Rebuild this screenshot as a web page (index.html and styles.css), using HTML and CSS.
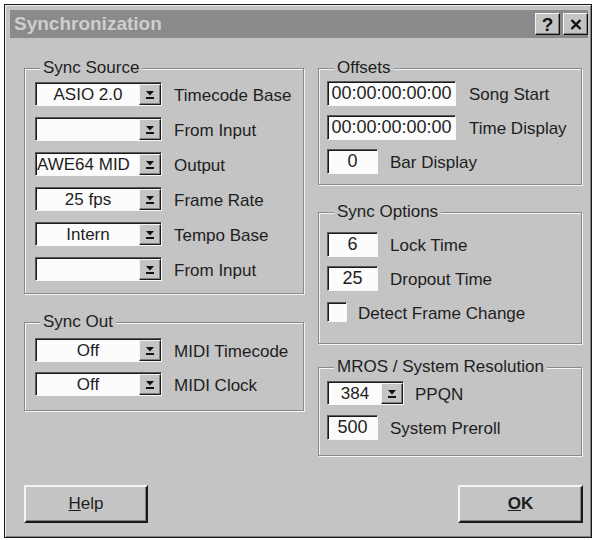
FILE: index.html
```html
<!DOCTYPE html>
<html>
<head>
<meta charset="utf-8">
<link rel="stylesheet" href="styles.css">
</head>
<body>
<div class="window">
  <div class="titlebar">
    <span class="title">Synchronization</span>
    <div class="tb-btns">
      <span class="tb-btn">?</span>
      <span class="tb-btn"><svg width="12" height="11" viewBox="0 0 12 11"><path d="M1.5 1 L10.5 10 M10.5 1 L1.5 10" stroke="#111" stroke-width="2.4" fill="none"/></svg></span>
    </div>
  </div>

  <div class="columns">
    <div class="col col-left">
      <div class="group src">
        <div class="legend">Sync Source</div>
        <div class="rows">
          <div class="row"><div class="combo"><span class="val">ASIO 2.0</span><span class="dd"><svg width="10" height="10" viewBox="0 0 10 10"><path d="M1 1 H9 L5 5.5 Z" fill="#111"/><rect x="1" y="7" width="8" height="2" fill="#111"/></svg></span></div><span class="lbl">Timecode Base</span></div>
          <div class="row"><div class="combo"><span class="val"></span><span class="dd"><svg width="10" height="10" viewBox="0 0 10 10"><path d="M1 1 H9 L5 5.5 Z" fill="#111"/><rect x="1" y="7" width="8" height="2" fill="#111"/></svg></span></div><span class="lbl">From Input</span></div>
          <div class="row"><div class="combo"><span class="val val-left">AWE64 MID</span><span class="dd"><svg width="10" height="10" viewBox="0 0 10 10"><path d="M1 1 H9 L5 5.5 Z" fill="#111"/><rect x="1" y="7" width="8" height="2" fill="#111"/></svg></span></div><span class="lbl">Output</span></div>
          <div class="row"><div class="combo"><span class="val">25 fps</span><span class="dd"><svg width="10" height="10" viewBox="0 0 10 10"><path d="M1 1 H9 L5 5.5 Z" fill="#111"/><rect x="1" y="7" width="8" height="2" fill="#111"/></svg></span></div><span class="lbl">Frame Rate</span></div>
          <div class="row"><div class="combo"><span class="val">Intern</span><span class="dd"><svg width="10" height="10" viewBox="0 0 10 10"><path d="M1 1 H9 L5 5.5 Z" fill="#111"/><rect x="1" y="7" width="8" height="2" fill="#111"/></svg></span></div><span class="lbl">Tempo Base</span></div>
          <div class="row"><div class="combo"><span class="val"></span><span class="dd"><svg width="10" height="10" viewBox="0 0 10 10"><path d="M1 1 H9 L5 5.5 Z" fill="#111"/><rect x="1" y="7" width="8" height="2" fill="#111"/></svg></span></div><span class="lbl">From Input</span></div>
        </div>
      </div>

      <div class="group out">
        <div class="legend">Sync Out</div>
        <div class="rows">
          <div class="row"><div class="combo"><span class="val">Off</span><span class="dd"><svg width="10" height="10" viewBox="0 0 10 10"><path d="M1 1 H9 L5 5.5 Z" fill="#111"/><rect x="1" y="7" width="8" height="2" fill="#111"/></svg></span></div><span class="lbl">MIDI Timecode</span></div>
          <div class="row"><div class="combo"><span class="val">Off</span><span class="dd"><svg width="10" height="10" viewBox="0 0 10 10"><path d="M1 1 H9 L5 5.5 Z" fill="#111"/><rect x="1" y="7" width="8" height="2" fill="#111"/></svg></span></div><span class="lbl">MIDI Clock</span></div>
        </div>
      </div>
    </div>

    <div class="col col-right">
      <div class="group offsets">
        <div class="legend">Offsets</div>
        <div class="rows rows-r">
          <div class="row"><div class="field long">00:00:00:00:00</div><span class="lbl lbl-long">Song Start</span></div>
          <div class="row"><div class="field long">00:00:00:00:00</div><span class="lbl lbl-long">Time Display</span></div>
          <div class="row"><div class="field short">0</div><span class="lbl">Bar Display</span></div>
        </div>
      </div>

      <div class="group opts">
        <div class="legend">Sync Options</div>
        <div class="rows rows-r">
          <div class="row"><div class="field short">6</div><span class="lbl">Lock Time</span></div>
          <div class="row"><div class="field short">25</div><span class="lbl">Dropout Time</span></div>
          <div class="row"><div class="chk"></div><span class="lbl lbl-chk">Detect Frame Change</span></div>
        </div>
      </div>

      <div class="group mros">
        <div class="legend">MROS / System Resolution</div>
        <div class="rows rows-r">
          <div class="row"><div class="combo combo-s"><span class="val">384</span><span class="dd"><svg width="10" height="10" viewBox="0 0 10 10"><path d="M1 1 H9 L5 5.5 Z" fill="#111"/><rect x="1" y="7" width="8" height="2" fill="#111"/></svg></span></div><span class="lbl lbl-ppqn">PPQN</span></div>
          <div class="row"><div class="field short">500</div><span class="lbl">System Preroll</span></div>
        </div>
      </div>
    </div>
  </div>

  <div class="footer">
    <div class="btn"><span><u>H</u>elp</span></div>
    <div class="btn btn-ok"><span><u>O</u>K</span></div>
  </div>
</div>
</body>
</html>
```

FILE: styles.css
```css
* { box-sizing: border-box; }

body {
  margin: 0;
  background: #ffffff;
  font-family: "Liberation Sans", Arial, sans-serif;
  font-size: 17px;
  color: #1e1e1e;
}

.window {
  margin: 4px 0 0 4px;
  width: 588px;
  height: 534px;
  background: #c4c4c4;
  border: 1px solid #1a1a1a;
  box-shadow: inset 1px 1px 0 #efefef, inset -1px -1px 0 #808080;
  padding: 5px 3px 5px 5px;
  display: flex;
  flex-direction: column;
}

/* title bar */
.titlebar {
  height: 28px;
  flex: none;
  background: #8a8a8a;
  display: flex;
  align-items: center;
  padding: 0 0 0 4px;
}
.title {
  flex: 1;
  font-weight: bold;
  font-size: 19px;
  color: #cecece;
}
.tb-btns { display: flex; gap: 3px; }
.tb-btn {
  width: 25px;
  height: 22px;
  background: #c4c4c4;
  border: 1px solid;
  border-color: #f4f4f4 #111 #111 #f4f4f4;
  box-shadow: inset -1px -1px 0 #808080;
  display: flex;
  align-items: center;
  justify-content: center;
  font-weight: bold;
  font-size: 19px;
  color: #111;
  line-height: 1;
}

/* columns */
.columns {
  display: flex;
  gap: 14px;
  padding: 30px 0 0 14px;
}
.col-left { width: 280px; }
.col-right { width: 264px; }

/* group boxes */
.group {
  border: 1px solid #8a8a8a;
  box-shadow: 1px 1px 0 #f4f4f4, inset 1px 1px 0 #f4f4f4;
}
.legend {
  display: table;
  margin: -12px 0 0 15px;
  padding: 0 3px;
  height: 22px;
  line-height: 22px;
  background: #c4c4c4;
}
.rows {
  display: flex;
  flex-direction: column;
  padding-left: 10px;
}
.rows-r { padding-left: 8px; }

.src .rows { margin-top: 3px; padding-bottom: 12px; gap: 11px; }
.out { margin-top: 28px; }
.out .rows { margin-top: 5px; padding-bottom: 14px; gap: 10px; }

.offsets .rows { margin-top: 2px; padding-bottom: 10px; gap: 9px; }
.opts { margin-top: 27px; }
.opts .rows { margin-top: 9px; padding-bottom: 19px; gap: 9px; }
.mros { margin-top: 23px; }
.mros .rows { margin-top: 3px; padding-bottom: 15px; gap: 10px; }

.row {
  display: flex;
  align-items: center;
}
.lbl {
  margin-left: 12px;
  padding-top: 3px;
  white-space: nowrap;
}
.lbl-long { margin-left: 13px; }
.lbl-chk { margin-left: 11px; }
.lbl-ppqn { margin-left: 11px; }

/* combo box */
.combo {
  width: 127px;
  height: 24px;
  display: flex;
  background: #fcfcfc;
  border: 1px solid;
  border-color: #5a5a5a #f8f8f8 #f8f8f8 #5a5a5a;
  box-shadow: inset 1px 1px 0 #1a1a1a;
  padding: 1px 0 0 1px;
}
.combo-s { width: 77px; }
.val {
  flex: 1;
  min-width: 0;
  text-align: center;
  line-height: 21px;
  font-size: 17px;
  overflow: hidden;
  white-space: nowrap;
}
.val-left { text-align: left; }
.dd {
  width: 22px;
  flex: none;
  background: #c4c4c4;
  border: 1px solid;
  border-color: #f4f4f4 #1a1a1a #1a1a1a #f4f4f4;
  box-shadow: inset -1px -1px 0 #808080;
  display: flex;
  align-items: center;
  justify-content: center;
}

/* text fields */
.field {
  height: 25px;
  background: #fcfcfc;
  border: 1px solid;
  border-color: #5a5a5a #f8f8f8 #f8f8f8 #5a5a5a;
  box-shadow: inset 1px 1px 0 #1a1a1a;
  text-align: center;
  font-size: 18px;
  line-height: 23px;
  white-space: nowrap;
  overflow: hidden;
}
.long { width: 129px; }
.short { width: 51px; }

.chk {
  width: 20px;
  height: 20px;
  margin: 2px 0;
  background: #fcfcfc;
  border: 1px solid;
  border-color: #5a5a5a #f8f8f8 #f8f8f8 #5a5a5a;
  box-shadow: inset 1px 1px 0 #1a1a1a;
}

/* footer buttons */
.footer {
  margin-top: auto;
  display: flex;
  justify-content: space-between;
  padding: 0 5px 9px 14px;
}
.btn {
  width: 124px;
  height: 38px;
  background: #c4c4c4;
  border: 2px solid;
  border-color: #f4f4f4 #1a1a1a #1a1a1a #f4f4f4;
  box-shadow: inset -1px -1px 0 #808080;
  display: flex;
  align-items: center;
  justify-content: center;
  font-size: 17px;
  color: #1e1e1e;
}
.btn-ok { width: 125px; font-weight: bold; }
```
